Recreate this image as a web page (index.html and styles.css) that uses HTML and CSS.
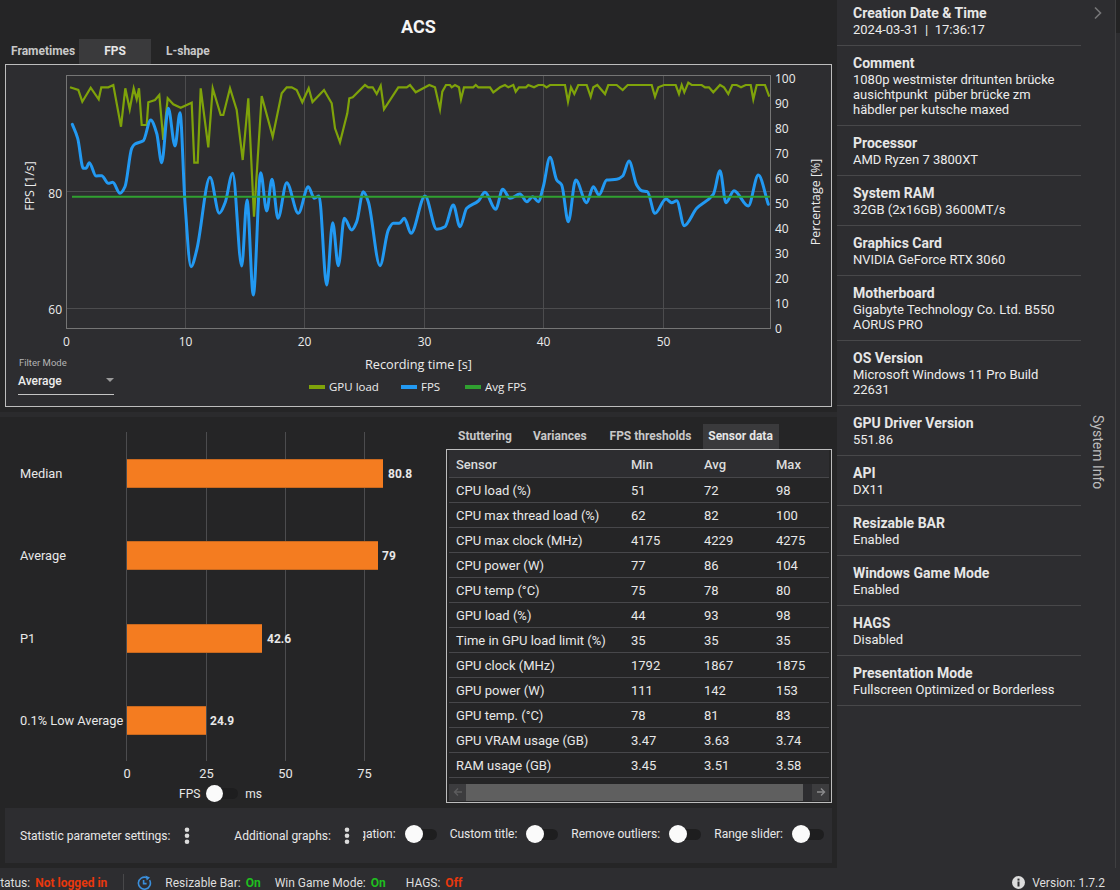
FILE: index.html
```html
<!DOCTYPE html>
<html lang="en">
<head>
<meta charset="utf-8">
<title>CapFrameX ACS</title>
<link rel="stylesheet" href="styles.css">
</head>
<body>
<div class="app">
  <div class="main">
    <section class="content">
      <h1 class="title">ACS</h1>
      <nav class="tabs tabs-top">
        <span class="tab tab-frametimes">Frametimes</span>
        <span class="tab tab-fps active">FPS</span>
        <span class="tab tab-lshape">L-shape</span>
      </nav>
      <div class="chart-box">
        <svg class="chart" width="825" height="341" viewBox="6 65 825 341">
          <g class="grid">
            <line x1="185.5" y1="75.5" x2="185.5" y2="328.5"/>
            <line x1="304.5" y1="75.5" x2="304.5" y2="328.5"/>
            <line x1="424.5" y1="75.5" x2="424.5" y2="328.5"/>
            <line x1="543.5" y1="75.5" x2="543.5" y2="328.5"/>
            <line x1="663.5" y1="75.5" x2="663.5" y2="328.5"/>
            <line x1="66.5" y1="191.5" x2="770.5" y2="191.5"/>
            <line x1="66.5" y1="308.5" x2="770.5" y2="308.5"/>
          </g>
          <rect class="plot-frame" x="66.5" y="75.5" width="704" height="253"/>
          <polyline class="line-gpu" points="70,87.3 78.3,90 82.3,101.7 90.7,87.7 98.7,99.3 101.3,87.3 108.3,87.3 113.3,85 121,126.7 125.3,88.3 129.7,109.3 133.7,88.3 136.7,99.3 139,88.3 141.7,125 146.7,125 148.3,102.3 155,100 159.3,95 163.3,140 167.7,98.3 173.3,104.3 180.7,107.7 191.7,102.7 194.3,162.7 197.7,162.7 200.7,88.3 208.3,147.3 212.7,88.3 220.7,115 223.3,115 230,88.3 236.7,110 242.7,160 248.3,98.3 254,216.7 261.7,96 272.7,136.7 281.7,93.3 286.7,87.3 291.7,87.3 296.7,90 302.3,102.3 308.7,88.3 312.5,102 324,90 331.7,103.3 335,128.3 340,142.3 347.3,113.3 349.3,98.3 352.7,97.3 365,85 368.3,87.3 372.7,87.3 376.7,94 380.7,85.7 384,109.3 398.3,87.3 406.7,87.3 410,85 415.7,92.3 429.3,85 435,87.3 440,109.3 442.3,91.7 446,85 450,85 451.7,87.3 455,85 459,87.3 461,99.3 464,87.3 473.3,87.3 475.7,85 478.3,87.3 490,87.3 493.3,92.3 500,87.3 505,85 508.3,87.3 513.3,85 515.7,91.7 519,87.3 526,87.3 528.3,85 534,87.3 538.3,85 543.3,85 546.5,87.3 550,85 565,85 568,101.7 571,87.3 574.3,94 578.3,85 586.7,85 590.7,96.7 593.3,87.3 597.3,85 605,94 608.3,85 616.7,85 622.7,90 627.7,85 651.7,85 655,96.7 658.3,87.3 664,85 675.7,85 679,94 681.7,85 684.3,92.3 688.3,82.7 691.7,85 701.7,85 705,87.3 709,87.3 713.3,92.3 720,85 724,87.3 728.3,94 732.3,85 736.7,85 741,87.3 745.7,85 750.7,85 753.3,99.3 756.7,85 765,85 769.3,96.7"/>
          <path class="line-fps" id="fps-line" data-points="72.3,124.3 77.7,138.3 83.3,168.3 86,168.3 89.3,162.7 96,176 101.7,175.7 108.3,183.3 112.7,182.3 120,193.3 125,186.7 131.7,148.3 135,144 143.3,140.7 150.7,120 156.7,133.3 161.7,162.7 168.3,108.3 175,146 180,112.7 185,203 191,266.7 196.7,250 210,177.3 219.3,213.3 225,203 232.7,173.3 241.7,266 247,200 253.3,295 260.7,172.7 266.7,211 272,179.3 278,218.3 286.7,182.7 298.3,213.3 308.3,186.7 314.3,198.3 319,196 326.7,285 332.7,222.7 338.3,265.7 344.3,218.3 351.7,230 356.7,221.7 363.3,191.7 368.3,201.7 380,265.7 388.3,230 393.3,223.3 399.3,223.3 404.3,218.3 411,233.3 425,196 436.7,229.3 445,226.7 453.3,205 460,226.7 466.7,208.3 478.3,201 485,192.3 495.7,209.3 502.7,189.3 510,198.3 520,194 526.7,201.7 532.7,196.7 538.3,201.7 543.3,186.7 550,157.3 556.7,180 561.7,185 568.3,221.7 575.7,180 586.7,202.7 593.3,186.7 599,195 606.7,180 616.7,179.3 622.7,176 629,161 636.7,185 641.7,190.7 647.3,191.7 655,213.3 666,199 671.7,202.7 676.7,200.7 684.3,225.7 696.7,208.3 713.3,194.3 720,170.7 726,202.7 734,190.7 748.3,206 758.3,175 768.3,204.3"/>
          <line class="line-avg" x1="72" y1="196.8" x2="770" y2="196.8"/>
          <g class="axis-text">
            <text class="end" x="62" y="197.5">80</text>
            <text class="end" x="62" y="313.5">60</text>
            <text class="mid" x="66.5" y="346">0</text>
            <text class="mid" x="185.5" y="346">10</text>
            <text class="mid" x="304.5" y="346">20</text>
            <text class="mid" x="424.5" y="346">30</text>
            <text class="mid" x="543.5" y="346">40</text>
            <text class="mid" x="663.5" y="346">50</text>
            <text x="775" y="83">100</text>
            <text x="775" y="108">90</text>
            <text x="775" y="133">80</text>
            <text x="775" y="158">70</text>
            <text x="775" y="183">60</text>
            <text x="775" y="208">50</text>
            <text x="775" y="233">40</text>
            <text x="775" y="258">30</text>
            <text x="775" y="283">20</text>
            <text x="775" y="308">10</text>
            <text x="775" y="333">0</text>
            <text class="mid axis-title" transform="translate(34 186) rotate(-90)">FPS [1/s]</text>
            <text class="mid axis-title" transform="translate(820 202) rotate(-90)">Percentage [%]</text>
            <text class="mid axis-title-x" x="418.5" y="369">Recording time [s]</text>
          </g>
          <g class="legend">
            <rect class="swatch-gpu" x="309" y="385" width="16" height="4"/>
            <text x="329" y="391">GPU load</text>
            <rect class="swatch-fps" x="401" y="385" width="16" height="4"/>
            <text x="421" y="391">FPS</text>
            <rect class="swatch-avg" x="465" y="385" width="16" height="4"/>
            <text x="485" y="391">Avg FPS</text>
          </g>
        </svg>
        <div class="filter">
          <span class="filter-label">Filter Mode</span>
          <span class="filter-select">Average<i class="caret"></i></span>
        </div>
      </div>
      <div class="splitter"></div>
      <div class="lower">
        <div class="stats">
          <svg class="bars" width="446" height="366" viewBox="0 417 446 366">
            <g class="grid">
              <line x1="126.5" y1="432" x2="126.5" y2="761"/>
              <line x1="206.5" y1="432" x2="206.5" y2="761"/>
              <line x1="285.5" y1="432" x2="285.5" y2="761"/>
              <line x1="364.5" y1="432" x2="364.5" y2="761"/>
            </g>
            <rect class="bar-edge" x="127" y="459" width="256" height="29"/>
            <rect class="bar" x="127" y="460" width="256" height="27"/>
            <rect class="bar-edge" x="127" y="541" width="251" height="29"/>
            <rect class="bar" x="127" y="542" width="251" height="27"/>
            <rect class="bar-edge" x="127" y="624" width="135" height="29"/>
            <rect class="bar" x="127" y="625" width="135" height="27"/>
            <rect class="bar-edge" x="127" y="706" width="79" height="29"/>
            <rect class="bar" x="127" y="707" width="79" height="27"/>
            <g class="bar-label">
              <text x="20" y="478">Median</text>
              <text x="20" y="560">Average</text>
              <text x="20" y="643">P1</text>
              <text x="20" y="725">0.1% Low Average</text>
            </g>
            <g class="bar-value">
              <text x="388" y="478">80.8</text>
              <text x="382" y="560">79</text>
              <text x="267" y="643">42.6</text>
              <text x="210" y="725">24.9</text>
            </g>
            <g class="bar-label">
              <text class="mid" x="127" y="778">0</text>
              <text class="mid" x="206.5" y="778">25</text>
              <text class="mid" x="285.5" y="778">50</text>
              <text class="mid" x="364.5" y="778">75</text>
            </g>
          </svg>
          <div class="unit-switch">
            <span>FPS</span>
            <span class="toggle toggle-small"><i class="knob"></i></span>
            <span>ms</span>
          </div>
        </div>
        <div class="sensors">
          <nav class="tabs tabs-sensor">
            <span class="tab tab-stutter">Stuttering</span>
            <span class="tab tab-var">Variances</span>
            <span class="tab tab-thresh">FPS thresholds</span>
            <span class="tab tab-sensor active">Sensor data</span>
          </nav>
          <div class="table-box">
            <table class="sensor-table">
              <thead>
                <tr><th class="c1">Sensor</th><th class="c2">Min</th><th class="c3">Avg</th><th class="c4">Max</th></tr>
              </thead>
              <tbody>
                <tr><td>CPU load (%)</td><td>51</td><td>72</td><td>98</td></tr>
                <tr><td>CPU max thread load (%)</td><td>62</td><td>82</td><td>100</td></tr>
                <tr><td>CPU max clock (MHz)</td><td>4175</td><td>4229</td><td>4275</td></tr>
                <tr><td>CPU power (W)</td><td>77</td><td>86</td><td>104</td></tr>
                <tr><td>CPU temp (°C)</td><td>75</td><td>78</td><td>80</td></tr>
                <tr><td>GPU load (%)</td><td>44</td><td>93</td><td>98</td></tr>
                <tr><td>Time in GPU load limit (%)</td><td>35</td><td>35</td><td>35</td></tr>
                <tr><td>GPU clock (MHz)</td><td>1792</td><td>1867</td><td>1875</td></tr>
                <tr><td>GPU power (W)</td><td>111</td><td>142</td><td>153</td></tr>
                <tr><td>GPU temp. (°C)</td><td>78</td><td>81</td><td>83</td></tr>
                <tr><td>GPU VRAM usage (GB)</td><td>3.47</td><td>3.63</td><td>3.74</td></tr>
                <tr><td>RAM usage (GB)</td><td>3.45</td><td>3.51</td><td>3.58</td></tr>
              </tbody>
            </table>
            <div class="hscroll">
              <span class="hbtn"><svg width="10" height="10" viewBox="0 0 10 10"><path class="arrow" d="M9 5H1.5M5 1.5 1.5 5 5 8.5"/></svg></span>
              <span class="hthumb"></span>
              <span class="hbtn"><svg width="10" height="10" viewBox="0 0 10 10"><path class="arrow arrow-on" d="M1 5H8.5M5 1.5 8.5 5 5 8.5"/></svg></span>
            </div>
          </div>
        </div>
      </div>
      <div class="settings">
        <span class="setting-label setting-stat">Statistic parameter settings:</span>
        <svg class="dots dots-stat" width="6" height="18" viewBox="0 0 6 18"><circle cx="3" cy="2.7" r="2.3"/><circle cx="3" cy="8.7" r="2.3"/><circle cx="3" cy="14.7" r="2.3"/></svg>
        <span class="setting-label setting-add">Additional graphs:</span>
        <svg class="dots dots-add" width="6" height="18" viewBox="0 0 6 18"><circle cx="3" cy="2.7" r="2.3"/><circle cx="3" cy="8.7" r="2.3"/><circle cx="3" cy="14.7" r="2.3"/></svg>
        <div class="toggle-strip">
          <span class="setting-label">Aggregation:</span>
          <span class="toggle"><i class="knob"></i></span>
          <span class="setting-label">Custom title:</span>
          <span class="toggle"><i class="knob"></i></span>
          <span class="setting-label">Remove outliers:</span>
          <span class="toggle"><i class="knob"></i></span>
          <span class="setting-label">Range slider:</span>
          <span class="toggle"><i class="knob"></i></span>
        </div>
      </div>
    </section>
    <aside class="sidebar">
      <div class="info-list">
        <div class="info-row"><h3>Creation Date &amp; Time</h3><p>2024-03-31&nbsp; |&nbsp; 17:36:17</p></div>
        <div class="info-row"><h3>Comment</h3><p>1080p westmister dritunten brücke ausichtpunkt&nbsp; püber brücke zm häbdler per kutsche maxed</p></div>
        <div class="info-row"><h3>Processor</h3><p>AMD Ryzen 7 3800XT</p></div>
        <div class="info-row"><h3>System RAM</h3><p>32GB (2x16GB) 3600MT/s</p></div>
        <div class="info-row"><h3>Graphics Card</h3><p>NVIDIA GeForce RTX 3060</p></div>
        <div class="info-row"><h3>Motherboard</h3><p>Gigabyte Technology Co. Ltd. B550 AORUS PRO</p></div>
        <div class="info-row"><h3>OS Version</h3><p>Microsoft Windows 11 Pro Build 22631</p></div>
        <div class="info-row"><h3>GPU Driver Version</h3><p>551.86</p></div>
        <div class="info-row"><h3>API</h3><p>DX11</p></div>
        <div class="info-row"><h3>Resizable BAR</h3><p>Enabled</p></div>
        <div class="info-row"><h3>Windows Game Mode</h3><p>Enabled</p></div>
        <div class="info-row"><h3>HAGS</h3><p>Disabled</p></div>
        <div class="info-row"><h3>Presentation Mode</h3><p>Fullscreen Optimized or Borderless</p></div>
      </div>
      <div class="rail">
        <svg class="chevron" width="10" height="14" viewBox="0 0 10 14"><path d="M2 1.5 7.5 7 2 12.5"/></svg>
        <span class="rail-label">System Info</span>
      </div>
      <div class="edge"></div>
    </aside>
  </div>
  <footer class="status">
    <span class="st-label">Status:</span><b class="bad">Not logged in</b>
    <i class="st-sep"></i>
    <svg class="st-refresh" width="16" height="16" viewBox="0 0 16 16"><path d="M13.6 5.2A6 6 0 1 1 10.6 2.6"/><path d="M7.6 5V8.6H10.6"/><path class="fill" d="M9.4 0.4 14 2.6 10.8 5.6Z"/></svg>
    <span class="st-label">Resizable Bar:</span><b class="good">On</b>
    <span class="st-label st-gap">Win Game Mode:</span><b class="good">On</b>
    <span class="st-label st-gap2">HAGS:</span><b class="bad">Off</b>
    <span class="st-right">
      <svg width="13" height="13" viewBox="0 0 13 13"><circle class="info-disc" cx="6.5" cy="6.5" r="6.5"/><rect class="info-mark" x="5.5" y="5.5" width="2" height="5"/><rect class="info-mark" x="5.5" y="2.6" width="2" height="2"/></svg>
      <span class="st-version">Version:</span><span>1.7.2</span>
    </span>
  </footer>
</div>
<script src="app.js"></script>
</body>
</html>
```
FILE: styles.css
```css
* { box-sizing: border-box; }
html, body { margin: 0; padding: 0; height: 100%; overflow: hidden; background: #252526; }
body { font-family: Roboto, "Liberation Sans", sans-serif; color: #e8e8e8; font-size: 13px; }

.app { width: 1120px; height: 890px; display: flex; flex-direction: column; }
.main { display: flex; height: 868px; }
.content { width: 837px; flex: none; display: flex; flex-direction: column; }

.title { margin: 0; height: 39px; line-height: 54px; text-align: center; font-size: 18px; font-weight: 700; color: #f5f5f5; }

.tabs { display: flex; height: 25px; }
.tab { display: block; font-size: 12px; font-weight: 700; line-height: 25px; color: #c8c8c8; text-align: center; }
.tab.active { background: #3a3a3c; color: #e6e6e6; }
.tab-frametimes { margin-left: 11px; width: 64px; text-align: left; }
.tab-fps { margin-left: 4px; width: 72px; }
.tab-lshape { margin-left: 15px; }

.chart-box { position: relative; margin-left: 5px; width: 827px; height: 343px; border: 1px solid #bdbdbd; background: #2d2d30; }
.chart { display: block; }
.grid line { stroke: #4c4c4e; stroke-width: 1; }
.plot-frame { fill: none; stroke: #757575; stroke-width: 1; }
.line-gpu { fill: none; stroke: #7fa30a; stroke-width: 2.2; stroke-linejoin: miter; stroke-miterlimit: 6; }
.line-fps { fill: none; stroke: #2299f2; stroke-width: 3; stroke-linecap: round; stroke-linejoin: round; }
.line-avg { stroke: #30a030; stroke-width: 2; }
.axis-text text { font-family: "Open Sans", "Noto Sans", sans-serif; font-size: 12px; fill: #ececec; }
.legend text { font-family: "Open Sans", "Noto Sans", sans-serif; font-size: 11.5px; fill: #ececec; }
.axis-text .axis-title { font-size: 12.4px; }
.axis-text .axis-title-x { font-size: 12.7px; }
.axis-text .end { text-anchor: end; }
.axis-text .mid { text-anchor: middle; }
.swatch-gpu { fill: #7fa30a; }
.swatch-fps { fill: #2299f2; }
.swatch-avg { fill: #30a030; }

.filter { position: absolute; left: 12px; top: 292px; width: 96px; height: 38px; border-bottom: 1px solid #c4c4c4; }
.filter-label { display: block; font-size: 9.5px; line-height: 12px; color: #b4b4b4; padding-left: 1px; }
.filter-select { display: block; position: relative; margin-top: 5px; font-size: 12px; font-weight: 500; line-height: 14px; color: #ececec; }
.caret { position: absolute; right: 0; top: 4px; width: 0; height: 0; border-left: 4px solid transparent; border-right: 4px solid transparent; border-top: 4px solid #9a9a9a; }

.splitter { margin-top: 5px; height: 5px; background: #2b2b2d; }

.lower { display: flex; height: 386px; }
.stats { width: 446px; flex: none; }
.bars { display: block; }
.bar { fill: #f47c20; }
.bar-edge { fill: #c9691f; }
.bar-label text { font-size: 12.8px; fill: #e8e8e8; }
.bar-label .mid { text-anchor: middle; }
.bar-value text { font-size: 12px; font-weight: 700; fill: #e8e8e8; }

.unit-switch { display: flex; align-items: center; height: 20px; padding: 1px 0 0 179px; font-size: 12px; color: #e8e8e8; }
.unit-switch .toggle { margin: 0 7px 0 6px; }

.toggle { position: relative; display: block; width: 32px; height: 11px; border-radius: 6px; background: #1e1e1f; flex: none; }
.knob { position: absolute; left: 0; top: -4px; width: 18px; height: 18px; border-radius: 50%; background: #fafafa; }
.toggle-small .knob { width: 17px; height: 17px; top: -3px; }

.sensors { width: 386px; padding-top: 7px; flex: none; }
.tabs-sensor { height: 25px; }
.tabs-sensor .tab { font-size: 12px; }
.tab-stutter { margin-left: 12px; }
.tab-var { margin-left: 21px; }
.tab-thresh { margin-left: 23px; }
.tab-sensor { margin-left: 11px; width: 76px; }

.table-box { width: 386px; height: 354px; border: 1px solid #bdbdbd; background: #252526; padding: 0 2px; }
.sensor-table { width: 380px; border-collapse: collapse; table-layout: fixed; font-size: 13px; }
.sensor-table th { height: 27px; padding: 2px 0 0; text-align: left; font-weight: 500; color: #dcdcdc; background: #2d2d30; border-bottom: 1px solid #47474a; }
.sensor-table td { height: 25px; padding: 2px 0 0; border-bottom: 1px solid #47474a; color: #e8e8e8; }
.c1 { width: 182px; }
.c2 { width: 73px; }
.c3 { width: 72px; }
.sensor-table th:first-child, .sensor-table td:first-child { padding-left: 7px; }

.hscroll { display: flex; margin-top: 6px; height: 17px; background: #2d2d30; }
.hbtn { width: 17px; flex: none; display: flex; align-items: center; justify-content: center; background: #3c3c3e; }
.hthumb { width: 337px; background: #5f5f5f; margin-right: 9px; flex: none; }
.arrow { fill: none; stroke: #5c5c5e; stroke-width: 1.4; }
.arrow-on { stroke: #8a8a8c; }

.settings { margin: 5px 0 0 5px; width: 827px; height: 55px; background: #2d2d30; display: flex; align-items: center; }
.setting-label { font-size: 12px; color: #e8e8e8; white-space: nowrap; flex: none; }
.setting-stat { margin-left: 15px; }
.dots { fill: #dcdcdc; flex: none; }
.dots-stat { margin-left: 14px; }
.setting-add { margin-left: 44px; }
.dots-add { margin-left: 13px; }
.toggle-strip { margin-left: 13px; flex: 1; min-width: 0; overflow: hidden; display: flex; justify-content: flex-end; align-items: center; height: 30px; padding-right: 8px; margin-top: -3px; }
.toggle-strip .toggle { margin-left: 9px; margin-right: 13px; }
.toggle-strip .toggle:last-child { margin-right: 0; }

.sidebar { width: 283px; flex: none; background: #2d2d30; display: flex; overflow: hidden; }
.info-list { width: 244px; flex: none; margin-top: -4px; }
.info-row { padding: 8px 16px 8px 16px; border-bottom: 1px solid #48484a; }
.info-row h3 { margin: 0; font-size: 14px; line-height: 18px; font-weight: 700; color: #e6e6e6; }
.info-row p { margin: 0; font-size: 13px; line-height: 15px; color: #ececec; }
.rail { width: 35px; flex: none; border-right: 1px solid #3f3f41; display: flex; flex-direction: column; align-items: center; padding-top: 6px; }
.chevron { fill: none; stroke: #767678; stroke-width: 1.6; }
.rail-label { writing-mode: vertical-rl; margin-top: 395px; font-size: 14px; color: #bcbcbc; white-space: nowrap; }
.edge { flex: 1; background: linear-gradient(#232324 33px, #2d2d30 33px); }

.status { height: 22px; background: #2d2d30; display: flex; align-items: center; font-size: 12px; padding-top: 7px; margin-left: -7px; color: #dedede; }
.st-label { white-space: nowrap; }
.status b { font-weight: 700; margin-left: 5px; }
.bad { color: #e8380d; }
.good { color: #1fbf1f; }
.st-sep { display: block; width: 1px; height: 18px; margin: 0 0 0 16px; background: #48484a; }
.st-refresh { margin: 0 13px 0 12px; flex: none; fill: none; stroke: #3a8fdc; stroke-width: 1.6; }
.st-refresh .fill { fill: #3a8fdc; stroke: none; }
.st-gap { margin-left: 14px; }
.st-gap2 { margin-left: 20px; }
.st-right { margin-left: auto; margin-right: 15px; display: flex; align-items: center; gap: 3px; }
.st-right svg { margin-right: 4px; }
.info-disc { fill: #dcdcdc; }
.info-mark { fill: #2d2d30; }
```
FILE: app.js
```js
// Turn the sampled FPS points into a smooth monotone cubic curve.
var el = document.getElementById('fps-line');
var pts = el.getAttribute('data-points').trim().split(/\s+/).map(function (p) {
  return p.split(',').map(Number);
});
var n = pts.length, slopes = [], tan = [];
for (var i = 0; i < n - 1; i++) {
  slopes.push((pts[i + 1][1] - pts[i][1]) / (pts[i + 1][0] - pts[i][0]));
}
tan[0] = slopes[0];
tan[n - 1] = slopes[n - 2];
for (var j = 1; j < n - 1; j++) {
  var a = slopes[j - 1], b = slopes[j];
  tan[j] = a * b <= 0 ? 0 : 2 * a * b / (a + b);
}
var d = 'M' + pts[0][0] + ' ' + pts[0][1];
for (var k = 0; k < n - 1; k++) {
  var h = (pts[k + 1][0] - pts[k][0]) / 3;
  d += 'C' + (pts[k][0] + h).toFixed(2) + ' ' + (pts[k][1] + tan[k] * h).toFixed(2) + ' ' +
       (pts[k + 1][0] - h).toFixed(2) + ' ' + (pts[k + 1][1] - tan[k + 1] * h).toFixed(2) + ' ' +
       pts[k + 1][0] + ' ' + pts[k + 1][1];
}
el.setAttribute('d', d);
```
